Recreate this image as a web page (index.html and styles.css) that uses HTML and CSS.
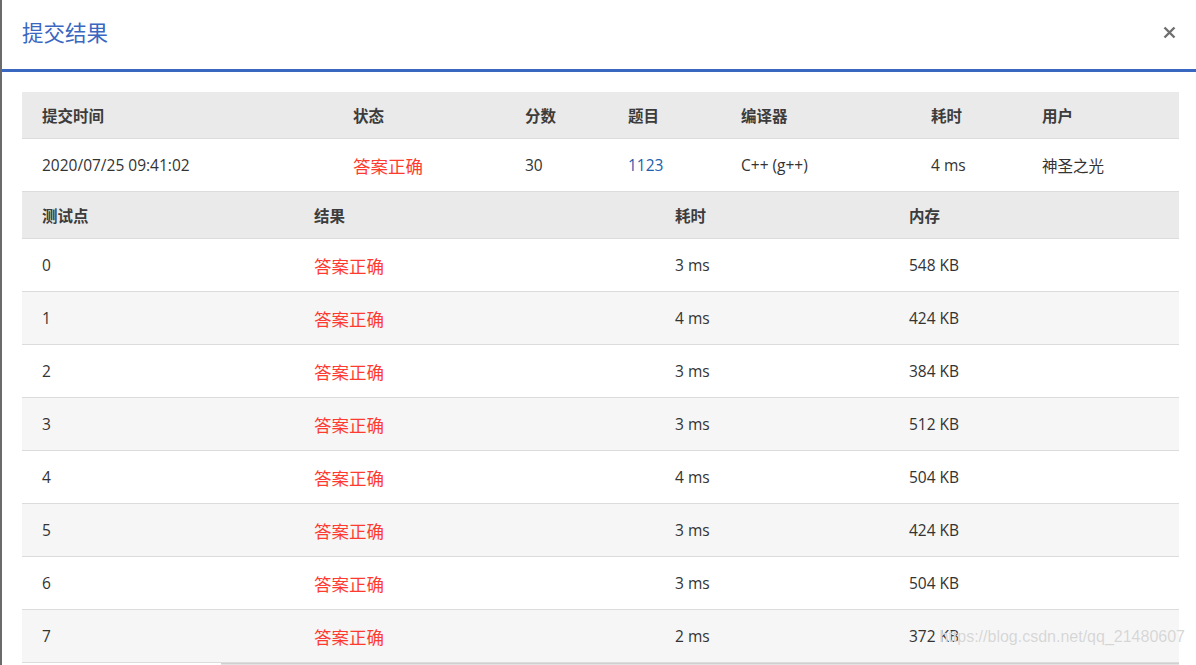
FILE: index.html
```html
<!DOCTYPE html>
<html lang="zh-CN">
<head>
  <meta charset="UTF-8">
  <title>提交结果</title>
  <link rel="stylesheet" href="styles.css">
</head>
<body>
  <div class="modal">
    <div class="modal-header">
      <h3 class="modal-title">提交结果</h3>
      <span class="close">
        <svg width="13" height="13" viewBox="0 0 13 13"><path d="M1.5 1.5 L11.5 11.5 M11.5 1.5 L1.5 11.5" stroke="#6f6f6f" stroke-width="2.4" fill="none"/></svg>
      </span>
    </div>
    <div class="modal-body">
      <table class="tbl">
        <colgroup>
          <col style="width:311px"><col style="width:172px"><col style="width:103px"><col style="width:113px"><col style="width:190px"><col style="width:111px"><col>
        </colgroup>
        <tr class="head">
          <td>提交时间</td><td>状态</td><td>分数</td><td>题目</td><td>编译器</td><td>耗时</td><td>用户</td>
        </tr>
        <tr>
          <td>2020/07/25 09:41:02</td><td class="ok">答案正确</td><td>30</td><td class="link">1123</td><td>C++ (g++)</td><td>4 ms</td><td>神圣之光</td>
        </tr>
      </table>
      <table class="tbl cases">
        <colgroup>
          <col style="width:272px"><col style="width:361px"><col style="width:234px"><col>
        </colgroup>
        <tr class="head"><td>测试点</td><td>结果</td><td>耗时</td><td>内存</td></tr>
        <tr><td>0</td><td class="ok">答案正确</td><td>3 ms</td><td>548 KB</td></tr>
        <tr class="alt"><td>1</td><td class="ok">答案正确</td><td>4 ms</td><td>424 KB</td></tr>
        <tr><td>2</td><td class="ok">答案正确</td><td>3 ms</td><td>384 KB</td></tr>
        <tr class="alt"><td>3</td><td class="ok">答案正确</td><td>3 ms</td><td>512 KB</td></tr>
        <tr><td>4</td><td class="ok">答案正确</td><td>4 ms</td><td>504 KB</td></tr>
        <tr class="alt"><td>5</td><td class="ok">答案正确</td><td>3 ms</td><td>424 KB</td></tr>
        <tr><td>6</td><td class="ok">答案正确</td><td>3 ms</td><td>504 KB</td></tr>
        <tr class="alt"><td>7</td><td class="ok">答案正确</td><td>2 ms</td><td>372 KB</td></tr>
      </table>
      <div class="scrollbar"></div>
      <span class="watermark">https://blog.csdn.net/qq_21480607</span>
    </div>
  </div>
</body>
</html>
```

FILE: styles.css
```css
html, body {
  margin: 0;
  height: 100%;
  overflow: hidden;
}
body {
  background: #6a6a6a;
  padding-left: 2px;
  font-family: "Open Sans", "Noto Sans CJK SC", sans-serif;
  color: #333;
}
.modal {
  background: #fff;
  height: 100%;
}
.modal-header {
  height: 69px;
  border-bottom: 3px solid #3a67c0;
  display: flex;
  align-items: center;
  justify-content: space-between;
  padding: 0 20px 0 20px;
}
.modal-title {
  margin: 0;
  font-family: "Noto Sans CJK SC", sans-serif;
  font-weight: normal;
  font-size: 21.5px;
  color: #3a67c0;
  padding-bottom: 6px;
}
.close {
  display: flex;
  margin-bottom: 4px;
}
.modal-body {
  position: relative;
  padding: 20px 17px 0 20px;
}
.tbl {
  width: 100%;
  border-collapse: collapse;
  table-layout: fixed;
  font-size: 15.5px;
}
.tbl td {
  padding: 0 0 0 20px;
  height: 52px;
  border-bottom: 1px solid #dcdcdc;
  white-space: nowrap;
}
.tbl .head td {
  background: #eaeaea;
  height: 46px;
  font-family: "Noto Sans CJK SC", sans-serif;
  font-weight: bold;
  font-size: 15.5px;
  color: #3c3c3c;
}
.tbl .alt td {
  background: #f6f6f6;
}
.ok {
  color: #ff3b30;
  font-family: "Noto Sans CJK SC", sans-serif;
  font-size: 17.5px;
}
.link {
  color: #2060ae;
}
.scrollbar {
  margin-left: 199px;
  height: 4px;
  background: #e4e4e4;
  border-top: 1px solid #d0d0d0;
}
.watermark {
  position: absolute;
  right: 11px;
  top: 556px;
  font-family: "Liberation Sans", sans-serif;
  font-size: 16px;
  color: #d6d6d6;
  text-shadow: 0 0 1px #fff;
}
```
